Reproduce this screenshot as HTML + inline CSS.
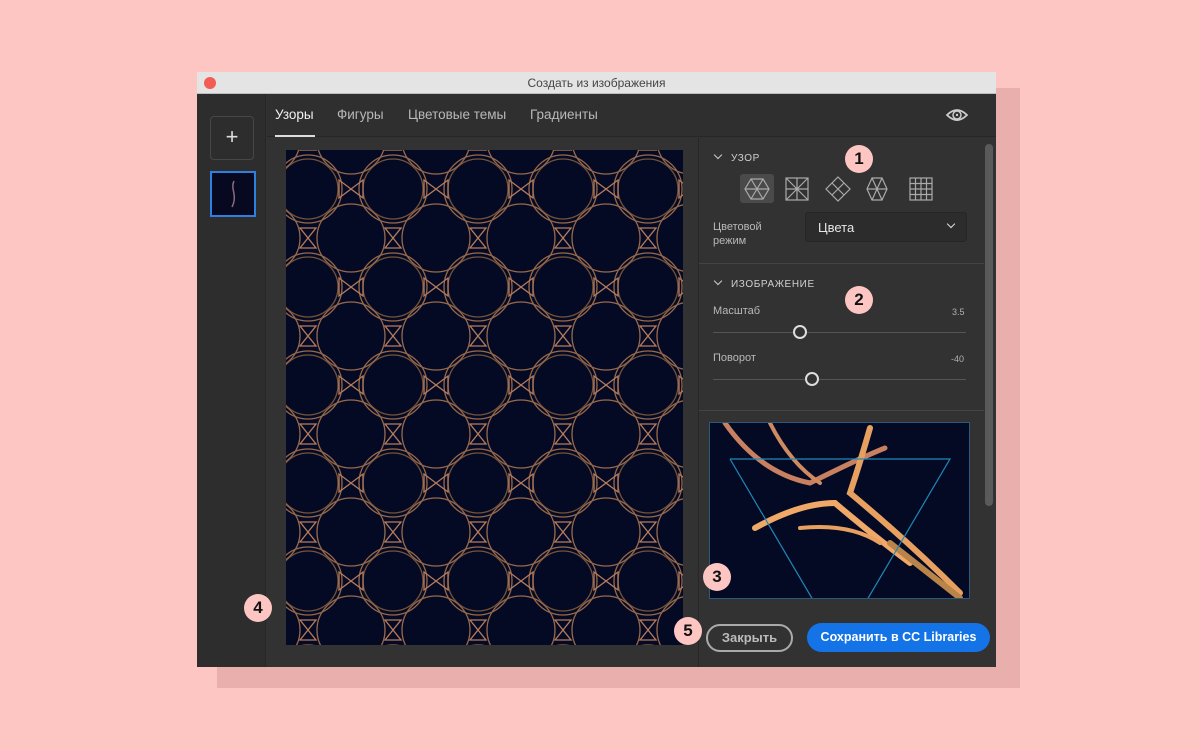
<!DOCTYPE html>
<html><head><meta charset="utf-8">
<style>
*{margin:0;padding:0;box-sizing:border-box}
body{width:1200px;height:750px;background:#fec6c3;font-family:"Liberation Sans","DejaVu Sans",sans-serif;position:relative;overflow:hidden}
.shadow{position:absolute;left:217px;top:88px;width:803px;height:600px;background:#e9afad}
.win{position:absolute;left:197px;top:72px;width:799px;height:595px;background:#323232;overflow:hidden}
.title{height:22px;background:#e4e4e4;border-bottom:1px solid #bdbdbd;text-align:center;font-size:12px;color:#444;line-height:22px}
.dot{position:absolute;left:7px;top:5px;width:12px;height:12px;border-radius:50%;background:#f25c54}
.left{position:absolute;left:0;top:22px;width:69px;height:573px;background:#2d2d2d;border-right:1px solid #262626}
.add{position:absolute;left:13px;top:22px;width:44px;height:44px;border:1px solid #474747;border-radius:4px;color:#ddd;font-size:22px;text-align:center;line-height:40px}
.thumb{position:absolute;left:13px;top:77px;width:46px;height:46px;border:2px solid #2d7fe0;background:#06091f}
.tabs{position:absolute;left:70px;top:22px;width:729px;height:43px;border-bottom:1px solid #262626;background:#2f2f2f}
.tab{position:absolute;top:13px;font-size:13.5px;color:#b8b8b8}
.tab.a{color:#f0f0f0}
.ul{position:absolute;left:8px;top:41px;width:40px;height:2px;background:#ddd}
.canvas{position:absolute;left:89px;top:78px;width:397px;height:495px;background:#050a24}
.right{position:absolute;left:501px;top:66px;width:298px;height:529px;background:#323232;border-left:1px solid #272727}
.hdr{position:absolute;left:14px;font-size:10px;color:#cfcfcf;letter-spacing:.6px}
.hdr:before{content:"";display:inline-block;width:5px;height:5px;border-right:1.5px solid #ccc;border-bottom:1.5px solid #ccc;transform:rotate(45deg);margin:0 10px 3px 2px}
.lbl{position:absolute;font-size:11px;color:#b9b9b9}
.num{position:absolute;font-size:9px;color:#b0b0b0}
.sel{position:absolute;left:106px;top:74px;width:162px;height:30px;border:1px solid #262626;background:#2c2c2c;border-radius:3px;color:#e6e6e6;font-size:13px;padding:7px 12px}
.track{position:absolute;left:14px;width:253px;height:1px;background:#555}
.knob{position:absolute;width:14px;height:14px;border:2px solid #ddd;border-radius:50%;background:#323232}
.sep{position:absolute;left:0;width:285px;height:1px;background:#444}
.scroll{position:absolute;left:286px;top:6px;width:8px;height:362px;border-radius:4px;background:#5a5a5a}
.badge{position:absolute;width:28px;height:28px;border-radius:50%;background:#fec6c3;color:#111;font-size:17px;font-weight:bold;text-align:center;line-height:28px}
.btn1{position:absolute;left:706px;top:624px;width:87px;height:28px;border:2px solid #aaa;border-radius:14px;color:#bbb;font-size:13px;font-weight:bold;text-align:center;line-height:24px}
.btn2{position:absolute;left:807px;top:623px;width:183px;height:29px;border-radius:15px;background:#1473e6;color:#fff;font-size:12.5px;font-weight:bold;text-align:center;line-height:29px}
</style></head><body>
<div class="shadow"></div>
<div class="win">
<div class="title"><div class="dot"></div>Создать из изображения</div>
<div class="left"><div class="add">+</div><div class="thumb"><svg width="42" height="42"><path d="M22 8 C18 16 26 22 20 34" stroke="#8a6a80" stroke-width="1.5" fill="none"/></svg></div></div>
<div class="tabs">
<span class="tab a" style="left:8px">Узоры</span><div class="ul"></div>
<span class="tab" style="left:70px">Фигуры</span>
<span class="tab" style="left:141px">Цветовые темы</span>
<span class="tab" style="left:263px">Градиенты</span>
<svg style="position:absolute;left:678px;top:11px" width="24" height="20" viewBox="0 0 24 20"><path d="M2 10 Q12 0 22 10 Q12 20 2 10Z" fill="none" stroke="#ccc" stroke-width="1.8"/><circle cx="12" cy="10" r="4" fill="none" stroke="#ccc" stroke-width="1.5"/><circle cx="12" cy="10" r="1.2" fill="#ccc"/></svg>
</div>
<div class="canvas">
<svg width="397" height="495">
<defs><pattern id="p" width="85" height="98" patternUnits="userSpaceOnUse" x="-20" y="-10">
<g fill="none" stroke="#c98858" stroke-width="1.3" opacity=".75">
<circle cx="42" cy="49" r="34"/><circle cx="42" cy="49" r="30" stroke="#9a6a40"/>
<circle cx="0" cy="0" r="34"/><circle cx="85" cy="0" r="34"/><circle cx="0" cy="98" r="34"/><circle cx="85" cy="98" r="34"/>
<path d="M0 49 L12 40 L12 58Z M85 49 L73 40 L73 58Z" stroke="#f0a070"/>
<path d="M42 0 L34 10 L50 10Z M42 98 L34 88 L50 88Z" stroke="#f0a070"/>
</g></pattern></defs>
<rect width="397" height="495" fill="url(#p)"/>
</svg></div>
<div class="right">
<div class="hdr" style="top:14px">УЗОР</div>
<div style="position:absolute;left:41px;top:36px;width:34px;height:29px;background:#4a4a4a;border-radius:3px"></div>
<svg style="position:absolute;left:45px;top:38px" width="230" height="26" viewBox="0 0 230 26" fill="none" stroke="#aaa" stroke-width="1.2">
<path d="M7 3 L19 3 L25 13 L19 23 L7 23 L1 13Z M1 13 L25 13 M7 3 L19 23 M19 3 L7 23"/>
<rect x="42" y="2" width="22" height="22"/><path d="M42 2 L64 24 M64 2 L42 24 M53 2 L53 24 M42 13 L64 13"/>
<path d="M94 1 L106 13 L94 25 L82 13Z M88 7 L100 19 M100 7 L88 19"/>
<path d="M128 2 L138 2 L143 13 L138 24 L128 24 L123 13Z M123 13 L143 13 M128 2 L138 24 M138 2 L128 24"/>
<rect x="166" y="2" width="22" height="22"/><path d="M171.5 2V24M177 2V24M182.5 2V24M166 7.5H188M166 13H188M166 18.5H188"/>
</svg>
<div class="lbl" style="left:14px;top:82px;line-height:14px">Цветовой<br>режим</div>
<div class="sel">Цвета<span style="position:absolute;right:12px;top:8px;width:6px;height:6px;border-right:1.5px solid #ddd;border-bottom:1.5px solid #ddd;transform:rotate(45deg)"></span></div>
<div class="sep" style="top:125px"></div>
<div class="hdr" style="top:140px">ИЗОБРАЖЕНИЕ</div>
<div class="lbl" style="left:14px;top:167px">Масштаб</div><div class="num" style="left:253px;top:169px">3.5</div>
<div class="track" style="top:194px"></div><div class="knob" style="left:94px;top:187px"></div>
<div class="lbl" style="left:14px;top:214px">Поворот</div><div class="num" style="left:252px;top:216px">-40</div>
<div class="track" style="top:241px"></div><div class="knob" style="left:106px;top:234px"></div>
<div class="sep" style="top:272px"></div>
<div style="position:absolute;left:10px;top:284px;width:261px;height:177px;background:#050a24;overflow:hidden;border:1px solid #2a5a7a">
<svg width="262" height="177"><g fill="none" stroke-linecap="round">
<path d="M15 0 Q50 50 100 60 Q150 35 175 25" stroke="#c98060" stroke-width="5"/>
<path d="M60 0 Q80 40 110 60" stroke="#d08a60" stroke-width="4"/>
<path d="M160 5 Q150 40 140 70 Q200 120 250 170" stroke="#e8a060" stroke-width="6"/>
<path d="M45 105 Q90 80 125 80 Q160 110 200 140" stroke="#f0a868" stroke-width="6"/>
<path d="M90 105 Q140 100 170 120" stroke="#e8a060" stroke-width="4"/>
<path d="M180 120 L250 175" stroke="#b8844a" stroke-width="6"/>
</g>
<path d="M20 36 L240 36 L157 177 M20 36 L103 177" fill="none" stroke="#1d8ab8" stroke-width="1.2"/>
</svg></div>
<div class="scroll"></div>
</div>
</div>
<div class="badge" style="left:845px;top:145px">1</div>
<div class="badge" style="left:845px;top:286px">2</div>
<div class="badge" style="left:703px;top:563px">3</div>
<div class="badge" style="left:244px;top:594px">4</div>
<div class="badge" style="left:674px;top:617px">5</div>
<div class="btn1">Закрыть</div>
<div class="btn2">Сохранить в CC Libraries</div>
</body></html>
